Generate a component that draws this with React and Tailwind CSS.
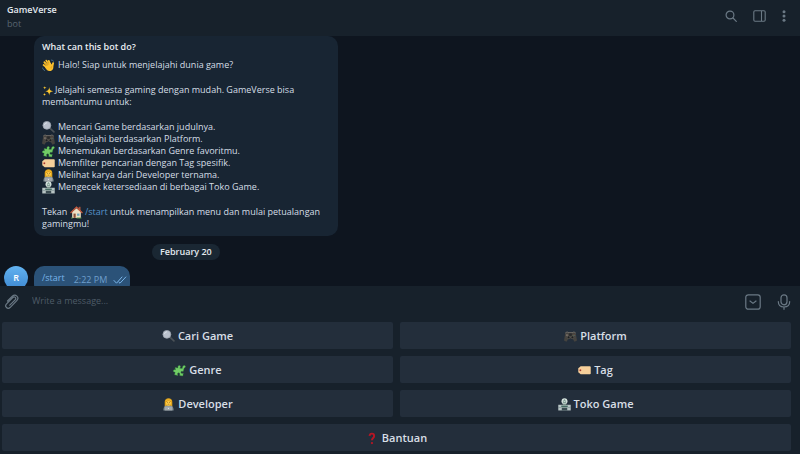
import React, { useState } from "react";

function WaveIcon({ className }) {
  return (
    <svg viewBox="0 0 24 24" className={className} aria-hidden="true">
      <g stroke="#fbc02d" strokeWidth="3.4" strokeLinecap="round">
        <path d="M11 13 4.500 6" />
        <path d="M13 11 8 3" />
        <path d="M15 10 12.500 3.500" />
        <path d="M10 16 3 11" />
        <path d="M19 15 20.500 7.500" />
      </g>
      <path d="M8 12.500 15.500 7l4.500 5.500c2.500 4.500-.5 10-6 9.800C10 22 8 19 5.500 15.500z" fill="#fbc02d" />
      <path d="M10 12.500 6.200 8M12.500 10.500 9.800 6M17 17.500c-.5-2.500.5-3.500 1.800-4.500" stroke="#c98212" strokeWidth=".9" fill="none" />
      <path d="M1 16c.6 2.800 2 4.500 4.500 5.500M16.500 1.800c2.500.3 4.300 1.200 5.500 3" stroke="#5c8fae" strokeWidth="1.200" fill="none" />
    </svg>
  );
}

function SparklesIcon({ className }) {
  return (
    <svg viewBox="0 0 24 24" className={className} fill="#fcc72f" aria-hidden="true">
      <path d="M14.500 4c.8 6 2 7.500 8 8.500-6 1-7.200 2.500-8 8.500-.8-6-2-7.500-8-8.500 6-1 7.200-2.500 8-8.500z" />
      <path d="M5.500 2c.3 2.500.9 3.200 3.500 3.600-2.600.4-3.200 1.100-3.500 3.600C5.200 6.700 4.600 6 2 5.600 4.600 5.200 5.200 4.500 5.500 2zM5 15.500c.3 2.300.8 2.900 3 3.300-2.200.4-2.700 1-3 3.200-.3-2.200-.8-2.800-3-3.200 2.200-.4 2.700-1 3-3.300z" />
    </svg>
  );
}

function LensIcon({ className }) {
  return (
    <svg viewBox="0 0 24 24" className={className} aria-hidden="true">
      <path d="m15 13.500 7 6.500" stroke="#4b5258" strokeWidth="3" strokeLinecap="round" />
      <circle cx="9" cy="8" r="7.300" fill="#b9c0cc" stroke="#9aa2ad" strokeWidth="1.400" />
      <path d="M4.500 7.500c.5-2.500 2-3.800 4.500-4" stroke="#e5eaf0" strokeWidth="1.500" fill="none" />
    </svg>
  );
}

function GamepadIcon({ className }) {
  return (
    <svg viewBox="0 0 24 24" className={className} aria-hidden="true">
      <path d="M2.500 5h19L24 19.500l-4.500 2-4-6h-7l-4 6-4.500-2z" fill="#45433f" />
      <path d="M2.500 5.500c2-2 4.500-2 6.500-.5h6c2-1.500 4.500-1.500 6.500.5" stroke="#77716a" strokeWidth="1.800" fill="none" />
      <path d="M9.500 6h5v5h-5z" fill="#292a2c" />
      <circle cx="8.500" cy="13.500" r="2.500" fill="#1d1f22" stroke="#6b645d" />
      <circle cx="15.500" cy="13.500" r="2.500" fill="#1d1f22" stroke="#6b645d" />
      <path d="M5.500 7.500v4M3.500 9.500h4" stroke="#8b8178" strokeWidth="1.200" />
      <circle cx="18.500" cy="8" r=".9" fill="#8a594d" />
      <circle cx="20" cy="10" r=".9" fill="#52758a" />
      <circle cx="17" cy="10" r=".9" fill="#66805a" />
    </svg>
  );
}

function PuzzleIcon({ className }) {
  return (
    <svg viewBox="0 0 24 24" className={className} aria-hidden="true">
      <path
        d="M4 6.500l5 1c1-1-.5-2 .3-3.500C10.500 2 14 2.600 13.800 5c-.1 1.500-1.600 2-1.300 3l4.500.5 1-4c1.500-3 5.500-2 5 .8-.4 2-2.500 1.600-3 3.700l-1 4.500c-1 .8-2-.7-3.500 0-1.800 1-1 4 1 4 1.200 0 1.700-.9 2.500-.5l-1 5-5.500-1c-.6-1 1-2 0-3.600-1.200-1.700-4-1.200-4.200.8-.1 1.400.9 1.800.5 2.800L3 20l1-5c-.7-.8-1.700.3-2.700-.6-1.500-1.600-.3-4.200 1.700-3.900 1 .1 1 .8 1.600.5z"
        fill="#72cc66"
        stroke="#35933f"
        strokeWidth=".7"
      />
    </svg>
  );
}

function TagIcon({ className }) {
  return (
    <svg viewBox="0 0 24 24" className={className} aria-hidden="true">
      <path d="M5 4h17c1 0 1.500.5 1.500 1.500v12c0 1-.5 1.500-1.500 1.500H5L.5 15V8z" fill="#f5cf9a" />
      <circle cx="4.300" cy="11.500" r="1.900" fill="#d34b3d" />
      <circle cx="4.300" cy="11.500" r=".9" fill="#512c27" />
    </svg>
  );
}

function DeveloperIcon({ className }) {
  return (
    <svg viewBox="0 0 24 24" className={className} aria-hidden="true">
      <path d="M5 16V7c0-4 3-6.500 7-6.500S19 3 19 7v9z" fill="#e3a51c" />
      <path d="M2.500 23c0-7 3-9 9.500-9s9.500 2 9.500 9z" fill="#75838c" />
      <ellipse cx="12" cy="8.500" rx="4.800" ry="5.800" fill="#fbca45" />
      <path d="M7 7c2.500-.5 4-1.500 5-3.500 1 2 2.500 3 5 3.500" stroke="#d99213" strokeWidth="1.600" fill="none" />
      <circle cx="10" cy="8.500" r=".8" fill="#593d29" />
      <circle cx="14" cy="8.500" r=".8" fill="#593d29" />
      <path d="M10.500 11.500h3" stroke="#8c542c" />
      <path d="M5 15.500h14V23H5z" fill="#a3a9ad" />
      <circle cx="12" cy="19" r="1.200" fill="#e1e6e8" />
    </svg>
  );
}

function StoreIcon({ className }) {
  return (
    <svg viewBox="0 0 24 24" className={className} aria-hidden="true">
      <circle cx="12" cy="6" r="5.500" fill="#d5e2dd" />
      <path d="M10 6.500 12 3l2 3.500M9 8h6" stroke="#426b60" strokeWidth="1.200" fill="none" />
      <path d="M9 10.500h6V13H9z" fill="#698279" />
      <path d="M.5 12.500h23V23H.5z" fill="#b7c4c4" />
      <path d="M6 14h12v3H6z" fill="#456c63" />
      <path d="M7 18h10v5H7z" fill="#3b4c52" />
      <path d="M.5 17.500H6M18 17.500h5.500" stroke="#728487" />
    </svg>
  );
}

function HouseIcon({ className }) {
  return (
    <svg viewBox="0 0 24 24" className={className} aria-hidden="true">
      <path d="M16 1.500h3.500V9H16z" fill="#a6523c" />
      <path d="M4 11 12 4l8 7v11H4z" fill="#eee0c6" />
      <path d="M1 13 12 2l11 11" stroke="#c85a3d" strokeWidth="2.200" fill="none" />
      <path d="M6.500 14h4v8h-4z" fill="#8b5138" />
      <path d="M13 14h4.500v4H13z" fill="#6aa5bc" />
      <path d="M2 21h3v2H2zm10 0h9v2h-9z" fill="#5b9a4c" />
    </svg>
  );
}

function QuestionIcon({ className }) {
  return (
    <svg viewBox="0 0 24 24" className={className} aria-hidden="true">
      <path d="M6.500 7c.5-3 2.300-4 4.300-4 2.500 0 4.200 1.500 4.200 4.200 0 3.800-4 3.800-4 8" stroke="#b71625" strokeWidth="3.600" fill="none" />
      <circle cx="11" cy="20.500" r="2.100" fill="#b71625" />
    </svg>
  );
}

const features = [
  { icon: LensIcon, text: "Mencari Game berdasarkan judulnya." },
  { icon: GamepadIcon, text: "Menjelajahi berdasarkan Platform." },
  { icon: PuzzleIcon, text: "Menemukan berdasarkan Genre favoritmu." },
  { icon: TagIcon, text: "Memfilter pencarian dengan Tag spesifik." },
  { icon: DeveloperIcon, text: "Melihat karya dari Developer ternama." },
  { icon: StoreIcon, text: "Mengecek ketersediaan di berbagai Toko Game." },
];

const keyboard = [
  { icon: LensIcon, label: "Cari Game" },
  { icon: GamepadIcon, label: "Platform" },
  { icon: PuzzleIcon, label: "Genre" },
  { icon: TagIcon, label: "Tag" },
  { icon: DeveloperIcon, label: "Developer" },
  { icon: StoreIcon, label: "Toko Game" },
  { icon: QuestionIcon, label: "Bantuan", wide: true },
];

function Header() {
  return (
    <header className="flex h-9 shrink-0 items-center justify-between bg-[#17212b] pr-[14px] pl-[7px]">
      <div className="pb-0.5">
        <h1 className="text-[9px] leading-[14px] font-semibold text-[#e4eaef]">GameVerse</h1>
        <p className="text-[9px] leading-[14px] text-[#596570]">bot</p>
      </div>
      <div className="flex items-center gap-4 pb-1 text-[#6b7985]">
        <button type="button" aria-label="Search">
          <svg viewBox="0 0 12 12" className="size-3" fill="none" stroke="currentColor" strokeWidth="1.200" strokeLinecap="round">
            <circle cx="5" cy="5" r="3.900" />
            <path d="m8 8 3.300 3.300" />
          </svg>
        </button>
        <button type="button" aria-label="Toggle side panel">
          <svg viewBox="0 0 13 12" className="h-3 w-[13px]" fill="none" stroke="currentColor" strokeWidth="1.100">
            <rect x=".8" y=".8" width="11.400" height="10.400" rx="1.200" />
            <path d="M8.500 1v10" />
          </svg>
        </button>
        <button type="button" aria-label="More options">
          <svg viewBox="0 0 4 12" className="h-3 w-1" fill="currentColor">
            <circle cx="2" cy="1.700" r="1.500" />
            <circle cx="2" cy="6" r="1.500" />
            <circle cx="2" cy="10.300" r="1.500" />
          </svg>
        </button>
      </div>
    </header>
  );
}

function BotIntro() {
  return (
    <section className="ml-[34px] max-w-[304px] rounded-[10px] bg-[#182533] px-2 pt-[5px] pb-1.5 text-[9px] leading-3 text-[#d5dee6]">
      <h2 className="mb-1.5 font-semibold text-[#e9eef2]">What can this bot do?</h2>
      <p className="flex items-center gap-[3px]">
        <WaveIcon className="-my-0.5 size-[13px]" />
        Halo! Siap untuk menjelajahi dunia game?
      </p>
      <p className="mt-[13px]">
        <SparklesIcon className="-my-0.5 mr-px inline size-3 align-middle" />
        Jelajahi semesta gaming dengan mudah. GameVerse bisa membantumu untuk:
      </p>
      <ul className="mt-[13px]">
        {features.map((item) => {
          const Icon = item.icon;
          return (
            <li key={item.text} className="flex items-center gap-[3px]">
              <Icon className="-my-0.5 size-[13px]" />
              {item.text}
            </li>
          );
        })}
      </ul>
      <p className="mt-[13px]">
        Tekan <HouseIcon className="-my-0.5 inline size-[13px] align-middle" />{" "}
        <a href="#start" className="text-[#5794cb]">/start</a> untuk menampilkan menu dan mulai petualangan gamingmu!
      </p>
    </section>
  );
}

function SentMessage() {
  return (
    <div className="flex items-start gap-1.5 pl-1">
      <div className="flex size-6 items-center justify-center rounded-full bg-gradient-to-b from-[#63b3f1] to-[#3d87d0] text-[9px] font-semibold text-white">
        R
      </div>
      <div className="flex items-start rounded-[10px] bg-[#2b5278] pt-1.5 pr-[3px] pb-2 pl-2 text-[9px] leading-3">
        <a href="#start" className="text-[#79b4e8]">/start</a>
        <span className="mt-0.5 ml-[9px] flex items-center gap-1.5 text-[#6f9fcb]">
          2:22 PM
          <svg viewBox="0 0 14 8" className="h-2 w-3.5" fill="none" stroke="#79b4e8" strokeLinecap="round">
            <path d="m1 4.500 2.500 2.700L9 1M6 6.300l1 .9L12.800 1" />
          </svg>
        </span>
      </div>
    </div>
  );
}

function Composer() {
  const [message, setMessage] = useState("");

  return (
    <form onSubmit={(e) => e.preventDefault()} className="flex h-8 shrink-0 items-center pr-[9px] pl-1 text-[#6b7985]">
      <button type="button" aria-label="Attach file">
        <svg viewBox="0 0 16 16" className="size-4" fill="none" stroke="currentColor" strokeWidth="1.200" strokeLinecap="round" strokeLinejoin="round">
          <path d="m3.500 7 4.800-4.800c3.200-3 7.500 1.200 4.500 4.400l-6.500 6.700c-2.800 2.600-6.200-.8-3.700-3.500l6.200-6.300c1.800-1.700 4 .5 2.300 2.300L5.800 11.200" />
        </svg>
      </button>
      <input
        type="text"
        aria-label="Message"
        placeholder="Write a message..."
        value={message}
        onChange={(e) => setMessage(e.target.value)}
        className="ml-3 min-w-0 flex-1 bg-transparent pb-0.5 text-[9px] leading-4 text-[#d5dee6] outline-none placeholder:text-[#4e5b67]"
      />
      <button type="button" aria-label="Hide bot keyboard">
        <svg viewBox="0 0 16 16" className="size-4" fill="none" stroke="currentColor" strokeWidth="1.200" strokeLinecap="round" strokeLinejoin="round">
          <rect x=".8" y=".8" width="14.400" height="14.400" rx="2.500" />
          <path d="M5 7 8 9.400 11 7" />
        </svg>
      </button>
      <button type="button" aria-label="Record voice message" className="ml-4">
        <svg viewBox="0 0 14 16" className="h-4 w-3.5" fill="none" stroke="currentColor" strokeWidth="1.200" strokeLinecap="round">
          <rect x="4" y=".8" width="6" height="10" rx="3" />
          <path d="M1.300 7.500c0 3.500 2.300 5.500 5.700 5.500s5.700-2 5.700-5.500M7 13v2.300" />
        </svg>
      </button>
    </form>
  );
}

function BotKeyboard() {
  return (
    <div className="grid shrink-0 grid-cols-2 gap-[7px] pt-1 pr-[9px] pb-[3px] pl-0.5">
      {keyboard.map((item) => {
        const Icon = item.icon;
        return (
          <button
            key={item.label}
            type="button"
            className={`flex h-[27px] items-center justify-center gap-[3px] rounded-xs bg-[#232e3b] pt-px text-[11px] font-semibold text-[#d8dfe6] hover:bg-[#2b3948] ${
              item.wide ? "col-span-2" : ""
            }`}
          >
            <Icon className="size-[13px]" />
            {item.label}
          </button>
        );
      })}
    </div>
  );
}

export default function App() {
  return (
    <div className="flex h-screen flex-col overflow-hidden bg-[#17212b] font-['Open_Sans','Noto_Sans',sans-serif]">
      <Header />
      <main className="min-h-0 flex-1 overflow-hidden bg-[#0e151f]">
        <BotIntro />
        <div className="mt-2 mb-1.5 flex pl-[152px]">
          <time className="rounded-full bg-[#1a2733] px-2 text-[9px] leading-4 font-semibold text-[#e4eaef]">
            February 20
          </time>
        </div>
        <SentMessage />
      </main>
      <Composer />
      <BotKeyboard />
    </div>
  );
}
